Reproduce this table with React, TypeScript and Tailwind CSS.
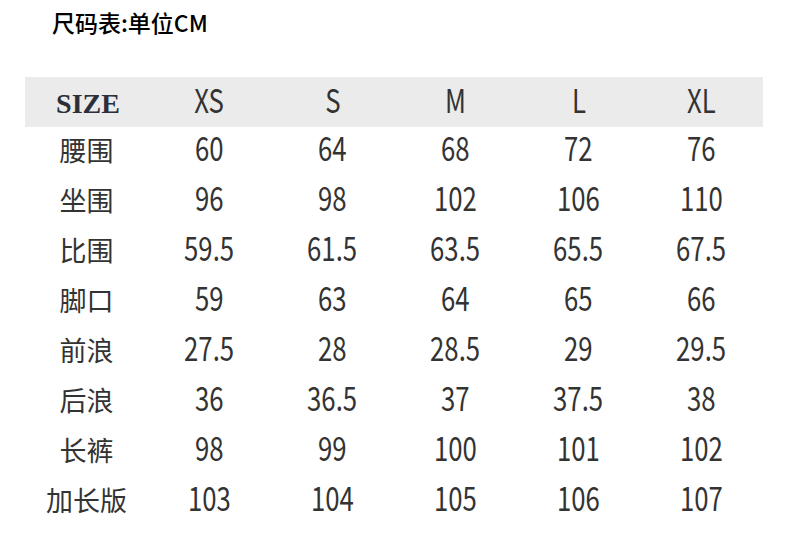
import React from "react";

const sizes = ["XS", "S", "M", "L", "XL"];
const rows: [string, string[]][] = [
  ["腰围", ["60", "64", "68", "72", "76"]],
  ["坐围", ["96", "98", "102", "106", "110"]],
  ["比围", ["59.5", "61.5", "63.5", "65.5", "67.5"]],
  ["脚口", ["59", "63", "64", "65", "66"]],
  ["前浪", ["27.5", "28", "28.5", "29", "29.5"]],
  ["后浪", ["36", "36.5", "37", "37.5", "38"]],
  ["长裤", ["98", "99", "100", "101", "102"]],
  ["加长版", ["103", "104", "105", "106", "107"]],
];

const font = { fontFamily: '"Noto Sans CJK SC", "Noto Sans", sans-serif' };

function Num({ v }: { v: string }) {
  return (
    <div className="flex justify-center pb-[9px]">
      <span className="inline-block text-[33px] leading-none scale-x-[0.78]">{v}</span>
    </div>
  );
}

export default function App() {
  return (
    <div className="w-[790px] h-[534px] bg-white overflow-hidden" style={font}>
      <div className="pl-[52px] pt-[7px] text-[23px] leading-[30px] font-medium text-black">尺码表:单位CM</div>
      <div className="ml-[25px] mt-[40px] w-[738px] text-[#333]">
        <div className="grid grid-cols-[repeat(6,123px)] h-[50px] bg-[#ebebeb] items-center text-center">
          <div className="font-['Liberation_Serif',serif] font-bold text-[28px] leading-none text-[#2b2f3a] pl-[3px] pt-[4px]">SIZE</div>
          {sizes.map((s) => (
            <div key={s} className="flex justify-center pb-[5px]">
              <span className="inline-block text-[33px] leading-none scale-x-[0.78]">{s}</span>
            </div>
          ))}
        </div>
        {rows.map(([label, vals]) => (
          <div key={label} className="grid grid-cols-[repeat(6,123px)] h-[50px] items-center text-center">
            <div className="text-[27px] leading-none pb-[5px]">{label}</div>
            {vals.map((v, i) => (
              <Num key={i} v={v} />
            ))}
          </div>
        ))}
      </div>
    </div>
  );
}
